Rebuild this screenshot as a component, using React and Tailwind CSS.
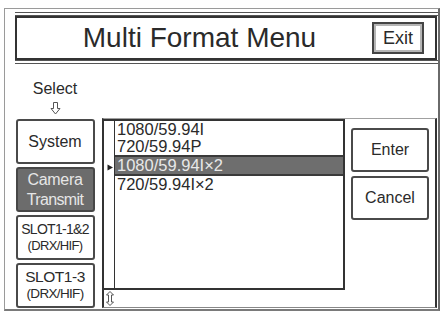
import React from 'react';

const ink = 'text-[#2a2a2a]';

const SideButton = ({ active, children }) => (
  <div
    className={`h-[45px] w-[79px] flex flex-col items-center justify-center rounded-[3px] border-2 ${
      active ? 'bg-[#6c6c6c] border-[#474747] text-[#e6e6e6]' : 'bg-white border-[#4a4a4a] ' + ink
    }`}
  >
    {children}
  </div>
);

const ActionButton = ({ children }) => (
  <div className={`h-[44px] w-[78px] flex items-center justify-center rounded-[3px] border-2 border-[#4a4a4a] text-[16px] ${ink}`}>
    {children}
  </div>
);

const formats = ['1080/59.94I', '720/59.94P', '1080/59.94I×2', '720/59.94I×2'];

export default function App() {
  return (
    <div className="w-[445px] h-[315px] bg-white overflow-hidden pt-[8px] pl-[4px] font-['Liberation_Sans',Arial,sans-serif]">
      {/* outer frame */}
      <div className="w-[436px] h-[303px] border-l border-t border-[#9a9a9a] border-r-2 border-b-2 border-r-[#6a6a6a] border-b-[#7a7a7a] pt-[3px] pl-[10px] flex flex-col">
        {/* header */}
        <div className="border-y-4 border-double border-[#555] h-[52px]">
          <div className="h-[44px] mr-[1px] border-2 border-[#333] flex items-center">
            <div className={`flex-1 text-center pl-[10px] text-[28px] leading-none ${ink}`}>Multi Format Menu</div>
            <div className={`mr-[11px] w-[52px] h-[32px] flex items-center justify-center border-2 border-[#444] shadow-[inset_0_0_0_2px_#b5b5b5] text-[18px] ${ink}`}>
              Exit
            </div>
          </div>
        </div>

        {/* body */}
        <div className="flex gap-[7px]">
          <div className="w-[80px] pt-[16px] flex flex-col items-center">
            <div className={`text-[16px] leading-[18px] ${ink}`}>Select</div>
            <svg width="11" height="13" viewBox="0 0 11 13" className="mt-[4px]">
              <path d="M3.5 0.5 H7.5 V6.5 H10 L5.5 12 L1 6.5 H3.5 Z" fill="none" stroke="#555" strokeWidth="1" />
            </svg>
            <div className="mt-[4px] flex flex-col gap-[3px]">
              <SideButton>
                <span className="text-[16px]">System</span>
              </SideButton>
              <SideButton active>
                <span className="text-[16px] leading-[20px] tracking-[-0.02em]">Camera</span>
                <span className="text-[16px] leading-[20px] tracking-[-0.04em]">Transmit</span>
              </SideButton>
              <SideButton>
                <span className="text-[14px] leading-[17px] tracking-[-0.05em]">SLOT1-1&amp;2</span>
                <span className="text-[13px] leading-[16px] tracking-[-0.05em]">(DRX/HIF)</span>
              </SideButton>
              <SideButton>
                <span className="text-[15.5px] leading-[16px] tracking-[-0.03em]">SLOT1-3</span>
                <span className="text-[13.5px] leading-[17px] tracking-[-0.05em]">(DRX/HIF)</span>
              </SideButton>
            </div>
          </div>

          {/* list panel */}
          <div className="mt-[54px] w-[335px] h-[190px] border-t border-t-[#a0a0a0] border-l-2 border-l-[#333] border-r-2 border-r-[#333] border-b border-b-[#888] flex">
            <div className="w-[241px] flex flex-col">
              <div className="h-[171px] border-y-2 border-r-2 border-[#333] flex">
                <div className="w-[11px] border-r-[1.5px] border-[#333] flex flex-col">
                  <div className="h-[43px]" />
                  <svg width="8" height="7" viewBox="0 0 8 7" className="ml-[2px]">
                    <path d="M1.5 0.5 L7 3.5 L1.5 6.5 Z" fill="#222" />
                  </svg>
                </div>
                <div className="flex-1 flex flex-col">
                  {formats.map((f, i) =>
                    i === 2 ? (
                      <div key={f} className="h-[21px] bg-[#6e6e6e] border-y-2 border-[#3a3a3a] pl-[2px] text-[16.5px] leading-[17px] text-[#e8e8e8]">
                        {f}
                      </div>
                    ) : (
                      <div key={f} className={`h-[17px] pl-[2px] text-[16.5px] leading-[17px] ${ink}`}>
                        {f}
                      </div>
                    )
                  )}
                </div>
              </div>
              <div className="h-[17px] pl-[2px] flex items-center">
                <svg width="8" height="15" viewBox="0 0 8 15">
                  <path d="M4 0.5 L7.5 4 H5.5 V11 H7.5 L4 14.5 L0.5 11 H2.5 V4 H0.5 Z" fill="none" stroke="#555" strokeWidth="1" />
                </svg>
              </div>
            </div>
            <div className="flex-1 pt-[9px] pl-[6px] flex flex-col gap-[4px]">
              <ActionButton>Enter</ActionButton>
              <ActionButton>Cancel</ActionButton>
            </div>
          </div>
        </div>
      </div>
    </div>
  );
}
